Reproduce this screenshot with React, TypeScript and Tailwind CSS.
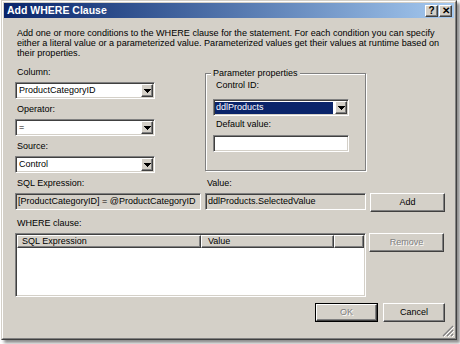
import React from "react";

const sunken =
  "border border-t-[#808080] border-l-[#808080] border-r-white border-b-white shadow-[inset_1px_1px_0_#404040,inset_-1px_-1px_0_#d4d0c8]";
const raised =
  "border border-t-white border-l-white border-r-[#404040] border-b-[#404040] shadow-[inset_-1px_-1px_0_#808080,inset_1px_1px_0_#d4d0c8]";
const disabledText = "text-[#808080] [text-shadow:1px_1px_0_#ffffff]";

function Arrow() {
  return (
    <svg width="7" height="4" viewBox="0 0 7 4" shapeRendering="crispEdges">
      <rect x="0" y="0" width="7" height="1" fill="#000" />
      <rect x="1" y="1" width="5" height="1" fill="#000" />
      <rect x="2" y="2" width="3" height="1" fill="#000" />
      <rect x="3" y="3" width="1" height="1" fill="#000" />
    </svg>
  );
}

function Combo({
  value,
  className,
  selected,
}: {
  value: string;
  className: string;
  selected?: boolean;
}) {
  return (
    <div className={`flex h-[17px] bg-white ${sunken} ${className}`}>
      <div className="flex flex-1 items-center overflow-hidden px-[1px]">
        {selected ? (
          <span className="flex h-[12px] flex-1 items-center bg-[#0a246a] pl-[1px] text-white">
            {value}
          </span>
        ) : (
          <span className="pl-[2px]">{value}</span>
        )}
      </div>
      <div
        className={`m-[1px] flex w-[12px] items-center justify-center bg-[#d4d0c8] ${raised}`}
      >
        <Arrow />
      </div>
    </div>
  );
}

function TextBox({
  value,
  className,
  readOnly,
}: {
  value?: string;
  className: string;
  readOnly?: boolean;
}) {
  return (
    <div
      className={`flex h-[17px] items-center overflow-hidden whitespace-nowrap pl-[2px] ${sunken} ${
        readOnly ? "bg-[#d4d0c8]" : "bg-white"
      } ${className}`}
    >
      {value}
    </div>
  );
}

function Button({
  label,
  className,
  disabled,
  isDefault,
}: {
  label: string;
  className: string;
  disabled?: boolean;
  isDefault?: boolean;
}) {
  const face = (
    <div
      className={`flex h-full w-full items-center justify-center bg-[#d4d0c8] ${raised} ${
        disabled ? disabledText : "text-black"
      }`}
    >
      {label}
    </div>
  );
  if (isDefault) {
    return <div className={`border border-black ${className}`}>{face}</div>;
  }
  return <div className={className}>{face}</div>;
}

function TitleButton({ children }: { children: React.ReactNode }) {
  return (
    <div
      className={`flex h-[12px] w-[13px] items-center justify-center bg-[#d4d0c8] text-[10px] font-bold leading-none text-black ${raised}`}
    >
      {children}
    </div>
  );
}

function Grip() {
  return (
    <svg width="12" height="12" viewBox="0 0 12 12">
      <path d="M11 1L1 11M11 5L5 11M11 9L9 11" stroke="#808080" strokeWidth="1.2" />
      <path d="M12 2L2 12M12 6L6 12M12 10L10 12" stroke="#ffffff" strokeWidth="1" />
    </svg>
  );
}

export default function App() {
  return (
    <div className="h-[344px] w-[460px] overflow-hidden bg-white font-['Liberation_Sans',Arial,sans-serif] text-[9px] text-black">
      <div className="ml-[1px] h-[340px] w-[456px] border border-t-[#d4d0c8] border-l-[#d4d0c8] border-r-[#404040] border-b-[#404040] shadow-[3px_3px_3px_rgba(0,0,0,0.45)]">
        <div className="h-full w-full border border-t-white border-l-white border-r-[#808080] border-b-[#808080] bg-[#d4d0c8] p-[1px]">
          <div className="relative flex h-full flex-col">
            {/* title bar */}
            <div className="flex h-[15px] shrink-0 items-center justify-between bg-gradient-to-r from-[#0a246a] to-[#a6caf0] pl-[3px] pr-[2px]">
              <span className="text-[10.5px] font-bold text-white">Add WHERE Clause</span>
              <div className="flex gap-[1px]">
                <TitleButton>?</TitleButton>
                <TitleButton>✕</TitleButton>
              </div>
            </div>

            <div className="flex flex-col pl-[11px]">
              <p className="mt-[10px] pl-[2px] text-[9.1px] leading-[10px] whitespace-nowrap">
                Add one or more conditions to the WHERE clause for the statement. For each condition you can specify
                <br />
                either a literal value or a parameterized value. Parameterized values get their values at runtime based on
                <br />
                their properties.
              </p>

              <div className="mt-[9px] flex">
                <div className="flex w-[140px] flex-col leading-[11px]">
                  <span className="pl-[2px]">Column:</span>
                  <Combo value="ProductCategoryID" className="mt-[4px] w-[140px]" />
                  <span className="mt-[5px] pl-[2px]">Operator:</span>
                  <Combo value="=" className="mt-[4px] w-[140px]" />
                  <span className="mt-[5px] pl-[2px]">Source:</span>
                  <Combo value="Control" className="mt-[4px] w-[140px]" />
                </div>

                <div className="relative ml-[50px] mt-[6px] h-[98px] w-[161px] border border-[#808080] shadow-[inset_1px_1px_0_#ffffff,1px_1px_0_#ffffff]">
                  <span className="absolute -top-[6px] left-[5px] bg-[#d4d0c8] px-[2px] leading-[11px]">
                    Parameter properties
                  </span>
                  <div className="flex flex-col pl-[7px] pt-[6px] leading-[11px]">
                    <span className="pl-[3px]">Control ID:</span>
                    <Combo value="ddlProducts" selected className="mt-[8px] w-[136px]" />
                    <span className="mt-[3px] pl-[3px]">Default value:</span>
                    <TextBox className="mt-[5px] w-[136px]" />
                  </div>
                </div>
              </div>

              <div className="mt-[5px] flex leading-[11px]">
                <span className="w-[190px] pl-[2px]">SQL Expression:</span>
                <span className="pl-[2px]">Value:</span>
              </div>

              <div className="mt-[4px] flex h-[19px] items-start">
                <TextBox readOnly value="[ProductCategoryID] = @ProductCategoryID" className="w-[186px]" />
                <TextBox readOnly value="ddlProducts.SelectedValue" className="ml-[4px] w-[161px]" />
                <Button label="Add" className="ml-[4px] h-[19px] w-[75px]" />
              </div>

              <span className="mt-[6px] pl-[2px] leading-[11px]">WHERE clause:</span>

              <div className="mt-[4px] flex items-start">
                <div className={`flex h-[64px] w-[351px] flex-col bg-white p-[1px] ${sunken}`}>
                  <div className="flex h-[13px] leading-[11px]">
                    <div className={`flex w-[184px] items-center bg-[#d4d0c8] pl-[4px] ${raised}`}>
                      SQL Expression
                    </div>
                    <div className={`flex w-[133px] items-center bg-[#d4d0c8] pl-[6px] ${raised}`}>
                      Value
                    </div>
                    <div className={`flex-1 bg-[#d4d0c8] ${raised}`} />
                  </div>
                  <div className="flex-1 bg-white" />
                </div>
                <Button label="Remove" disabled className="ml-[3px] h-[19px] w-[75px]" />
              </div>

              <div className="mt-[6px] flex justify-end pr-[9px]">
                <Button label="OK" disabled isDefault className="h-[19px] w-[63px]" />
                <Button label="Cancel" className="ml-[5px] h-[19px] w-[62px]" />
              </div>
            </div>

            <div className="absolute bottom-0 right-0">
              <Grip />
            </div>
          </div>
        </div>
      </div>
    </div>
  );
}
